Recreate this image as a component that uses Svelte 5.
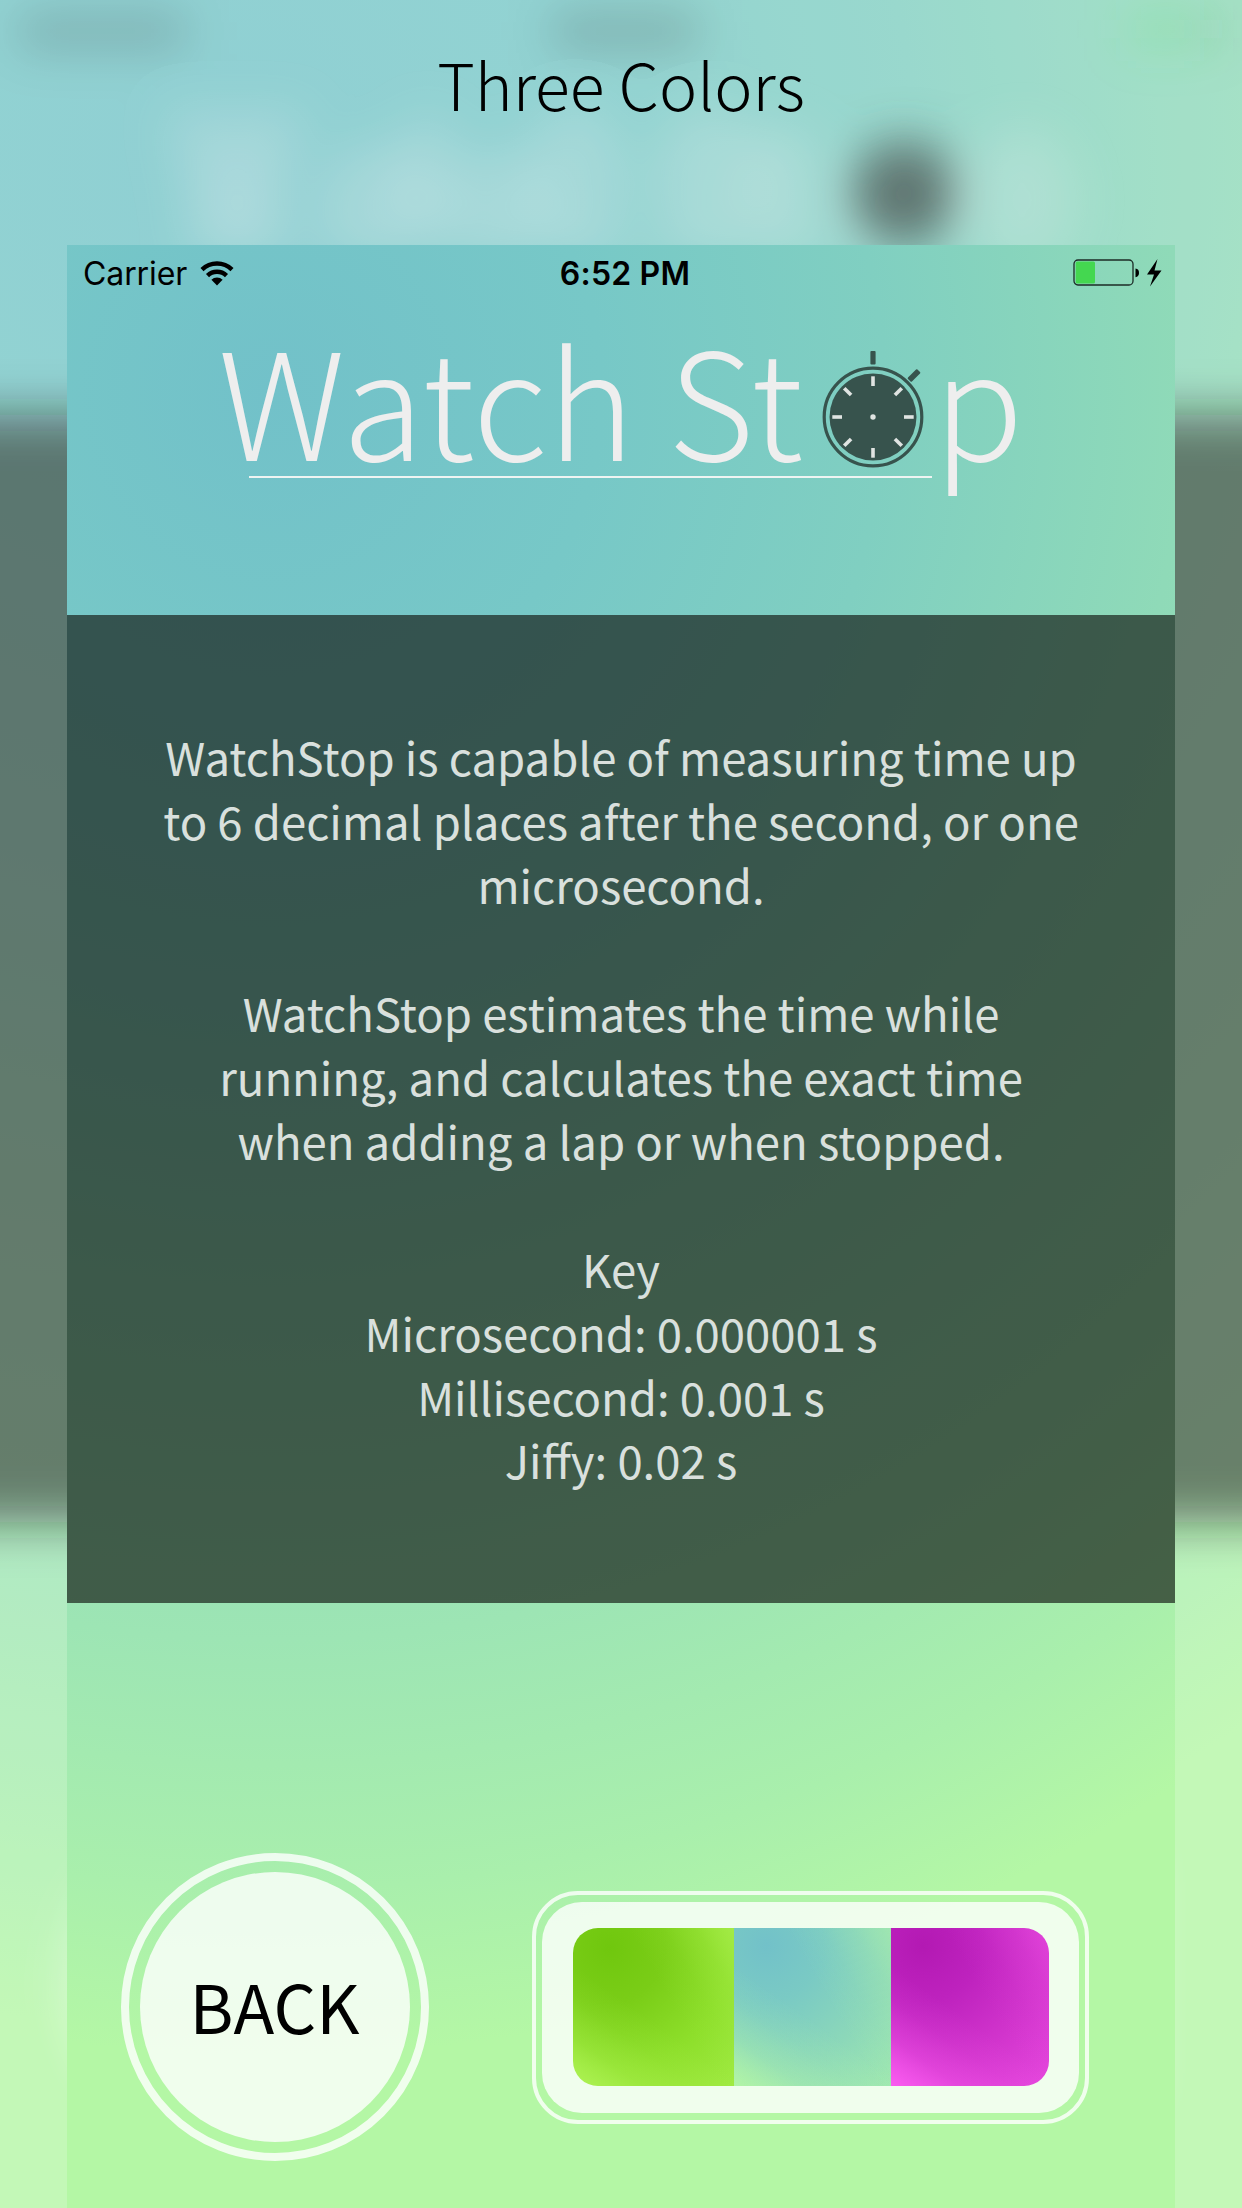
<script>
  const paragraphs = [
    ['WatchStop is capable of measuring time up', 'to 6 decimal places after the second, or one', 'microsecond.'],
    ['WatchStop estimates the time while', 'running, and calculates the exact time', 'when adding a lap or when stopped.'],
    ['Key', 'Microsecond: 0.000001 s', 'Millisecond: 0.001 s', 'Jiffy: 0.02 s']
  ];
  const ticks = [0, 45, 90, 135, 180, 225, 270, 315];
</script>

<div class="page">
  <svg class="backdrop" viewBox="0 0 1242 2208" aria-hidden="true">
    <defs>
      <radialGradient id="glow" gradientUnits="userSpaceOnUse" cx="228" cy="168" r="1860">
        <stop offset="0" stop-color="#74c4c8" />
        <stop offset="0.2" stop-color="#77c8c7" />
        <stop offset="0.37" stop-color="#80cfc1" />
        <stop offset="0.55" stop-color="#8fdab8" />
        <stop offset="0.75" stop-color="#9de5b4" />
        <stop offset="0.9" stop-color="#a9efac" />
        <stop offset="1" stop-color="#b4f7a5" />
      </radialGradient>
      <filter id="soft" filterUnits="userSpaceOnUse" x="-200" y="-200" width="1642" height="2608">
        <feGaussianBlur stdDeviation="24" />
      </filter>
    </defs>
    <rect width="1242" height="2208" fill="url(#glow)" />
    <g filter="url(#soft)">
      <rect x="-150" y="415" width="1542" height="1107" fill="#161910" fill-opacity="0.67" />
      <rect x="18" y="14" width="168" height="34" fill="#000" fill-opacity="0.22" />
      <rect x="552" y="14" width="146" height="34" fill="#000" fill-opacity="0.24" />
      <rect x="1128" y="12" width="64" height="34" fill="#44d750" fill-opacity="0.26" />
      <rect x="1192" y="12" width="34" height="34" fill="#000" fill-opacity="0.14" />
      <g fill="#eee" fill-opacity="0.2">
        <path d="M166 110H306L278 252H196Z" />
        <ellipse cx="238" cy="200" rx="36" ry="50" fill-opacity="0.1" />
        <ellipse cx="372" cy="200" rx="56" ry="56" />
        <ellipse cx="428" cy="180" rx="34" ry="66" />
        <ellipse cx="498" cy="204" rx="54" ry="54" />
        <ellipse cx="575" cy="180" rx="52" ry="76" />
        <ellipse cx="712" cy="180" rx="60" ry="74" />
        <ellipse cx="785" cy="190" rx="40" ry="66" />
        <ellipse cx="1022" cy="200" rx="54" ry="72" />
        <rect x="182" y="236" width="683" height="12" />
      </g>
      <circle cx="904" cy="193" r="52" fill="#37534d" />
      <circle cx="232" cy="1984" r="160" fill="#fff" fill-opacity="0.5" />
      <rect x="524" y="1850" width="620" height="255" fill="#fff" fill-opacity="0.6" />
    </g>
    <rect width="1242" height="2208" fill="#fff" fill-opacity="0.2" />
  </svg>

  <div class="content">
    <h1>Three Colors</h1>

    <main class="phone">
      <header>
        <div class="status">
          <div class="left">
            <span class="carrier">Carrier</span>
            <svg class="wifi" viewBox="0 0 34 25" width="34" height="25">
              <g fill="none" stroke="#000" stroke-width="4.4">
                <path d="M2 8.6A21.5 21.5 0 0 1 32 8.6" />
                <path d="M7.5 14.6A13.6 13.6 0 0 1 26.500 14.6" />
              </g>
              <path d="M11.400 18.800A8 8 0 0 1 22.600 18.800L17 24.600Z" />
            </svg>
          </div>
          <span class="clock">6:52 PM</span>
          <svg class="battery" viewBox="0 0 90 30" width="90" height="30">
            <rect x="1" y="2" width="59" height="25" rx="4" fill="none" stroke="#1c2b26" stroke-width="1.300" />
            <rect x="2.700" y="3.600" width="19.300" height="21.800" rx="1.500" fill="#44d750" />
            <path d="M62.500 10.500Q66 11 66 14.800T62.500 19.200Z" />
            <path d="M84.500 1L74 16.500H81L77 28.500L88.500 12.500H81.500Z" />
          </svg>
        </div>
        <div class="logo">
          <span class="word">Watch St</span>
          <svg class="watch" viewBox="0 0 102 120" width="102" height="120">
            <rect x="48.400" y="2" width="5.200" height="13.500" rx="1" fill="#37534d" />
            <rect x="-2.800" y="-6.700" width="5.600" height="13.400" rx="1" fill="#37534d" transform="translate(92 26.500) rotate(45)" />
            <circle cx="51" cy="68" r="48.800" fill="none" stroke="#37534d" stroke-width="3.200" />
            <circle cx="51" cy="68" r="43.500" fill="#37534d" />
            <circle cx="51" cy="68" r="2.700" fill="#e0e4e2" />
            {#each ticks as a}
              <path d="M51 27.300V37" transform="rotate({a} 51 68)" stroke="#e0e4e2" stroke-width="3.600" />
            {/each}
          </svg>
          <span class="word">p</span>
          <i class="rule"></i>
        </div>
      </header>

      <section>
        {#each paragraphs as lines}
          <p>
            {#each lines as line}<span>{line}</span>{/each}
          </p>
        {/each}
      </section>

      <footer>
        <button class="back"><b>BACK</b></button>
        <div class="picker">
          <div class="tray">
            <i class="lime"></i><i class="aqua"></i><i class="pink"></i>
          </div>
        </div>
      </footer>
    </main>
  </div>
</div>

<style>
  :global(body) { margin: 0; }
  .page {
    position: relative;
    width: 1242px;
    height: 2208px;
    overflow: hidden;
    font-family: "Source Sans Pro", "Noto Sans CJK SC", "Noto Sans", sans-serif;
  }
  .backdrop { position: absolute; inset: 0; width: 1242px; height: 2208px; }
  .content { position: relative; display: flex; flex-direction: column; align-items: center; height: 100%; }
  h1 {
    margin: 0;
    height: 245px;
    flex: none;
    line-height: 166px;
    font-size: 64.400px;
    font-weight: 300;
    color: #000;
    white-space: nowrap;
  }
  .phone {
    width: 1108px;
    height: 1963px;
    flex: none;
    display: flex;
    flex-direction: column;
    background: radial-gradient(circle 1660px at 203px 150px, #72c1c9 0%, #77c8c7 20%, #80cfc1 37%, #8fdab8 55%, #9de5b4 75%, #a9efac 90%, #b4f7a5 100%);
  }
  header { height: 370px; flex: none; }
  .status {
    display: grid;
    grid-template-columns: 1fr auto 1fr;
    align-items: center;
    height: 56px;
    padding: 0 12px 0 16px;
    font-family: Inter, "Liberation Sans", sans-serif;
    font-size: 32px;
    color: #000;
  }
  .left { display: flex; align-items: center; gap: 13px; }
  .carrier { letter-spacing: -0.100px; }
  .clock { font-weight: 600; letter-spacing: 0.200px; padding-left: 4px; }
  .battery { justify-self: end; }
  .logo {
    position: relative;
    display: flex;
    align-items: flex-start;
    height: 200px;
    margin-top: 10px;
    padding-left: 151px;
  }
  .word {
    margin-top: -14px;
    font-size: 148.500px;
    line-height: 200px;
    font-weight: 300;
    letter-spacing: 0.300px;
    color: #eee;
    white-space: pre;
  }
  .watch { flex: none; margin: 38px 9.500px 0 18.500px; }
  .rule { position: absolute; left: 182px; top: 165px; width: 683px; height: 2px; background: #eef4f2; }
  section {
    height: 988px;
    flex: none;
    box-sizing: border-box;
    padding-top: 110px;
    background: rgba(19, 25, 19, 0.67);
    color: #d9e0dd;
    font-size: 45.480px;
    line-height: 63.950px;
    text-align: center;
  }
  p { margin: 0 0 63.950px; }
  p span { display: block; white-space: nowrap; }
  footer { flex: 1; display: flex; align-items: flex-start; padding: 250px 0 0 53.500px; }
  .back {
    box-sizing: border-box;
    width: 308px;
    height: 308px;
    padding: 11px;
    border: 8px solid rgba(255, 255, 255, 0.8);
    border-radius: 50%;
    background: none;
    font: inherit;
    color: #000;
  }
  .back b {
    display: block;
    width: 270px;
    height: 270px;
    border-radius: 50%;
    background: rgba(255, 255, 255, 0.8);
    font-size: 67px;
    font-weight: 400;
    line-height: 266px;
  }
  .picker {
    box-sizing: border-box;
    width: 557px;
    height: 233px;
    margin: 38px 0 0 103px;
    padding: 7px 6px;
    border: 4px solid rgba(255, 255, 255, 0.8);
    border-radius: 46px;
  }
  .tray {
    box-sizing: border-box;
    display: flex;
    height: 211px;
    padding: 26px 30px 26px 31px;
    border-radius: 40px;
    background: rgba(255, 255, 255, 0.8);
  }
  .tray i { flex: 1; height: 158px; }
  .tray .lime {
    flex: 0 0 161px;
    border-radius: 25px 0 0 25px;
    background:
      linear-gradient(35deg, #aef355, rgba(174, 243, 85, 0.35) 18%, rgba(174, 243, 85, 0.1) 32%, rgba(174, 243, 85, 0) 45%),
      linear-gradient(240deg, rgba(165, 236, 72, 0.9), rgba(165, 236, 72, 0.35) 15%, rgba(165, 236, 72, 0.1) 28%, rgba(165, 236, 72, 0) 42%),
      radial-gradient(circle 185px at 36px 20px, #70c70e, #7acd17 30%, #8edf2b 66%, #9fea41);
  }
  .aqua {
    background:
      linear-gradient(35deg, #b2f5a6, rgba(178, 245, 166, 0.35) 18%, rgba(178, 245, 166, 0.1) 32%, rgba(178, 245, 166, 0) 45%),
      linear-gradient(240deg, rgba(161, 231, 176, 0.9), rgba(161, 231, 176, 0.35) 15%, rgba(161, 231, 176, 0.1) 28%, rgba(161, 231, 176, 0) 42%),
      radial-gradient(circle 185px at 32px 18px, #72c1c9, #7acac4 30%, #8cd8b9 66%, #9fe8b0);
  }
  .pink {
    border-radius: 0 25px 25px 0;
    background:
      linear-gradient(35deg, #fa5cf0, rgba(250, 92, 240, 0.35) 18%, rgba(250, 92, 240, 0.1) 32%, rgba(250, 92, 240, 0) 45%),
      linear-gradient(240deg, rgba(226, 68, 218, 0.9), rgba(226, 68, 218, 0.35) 15%, rgba(226, 68, 218, 0.1) 28%, rgba(226, 68, 218, 0) 42%),
      radial-gradient(circle 185px at 32px 18px, #b319b3, #be22be 30%, #d235cd 66%, #e547dd);
  }
</style>
